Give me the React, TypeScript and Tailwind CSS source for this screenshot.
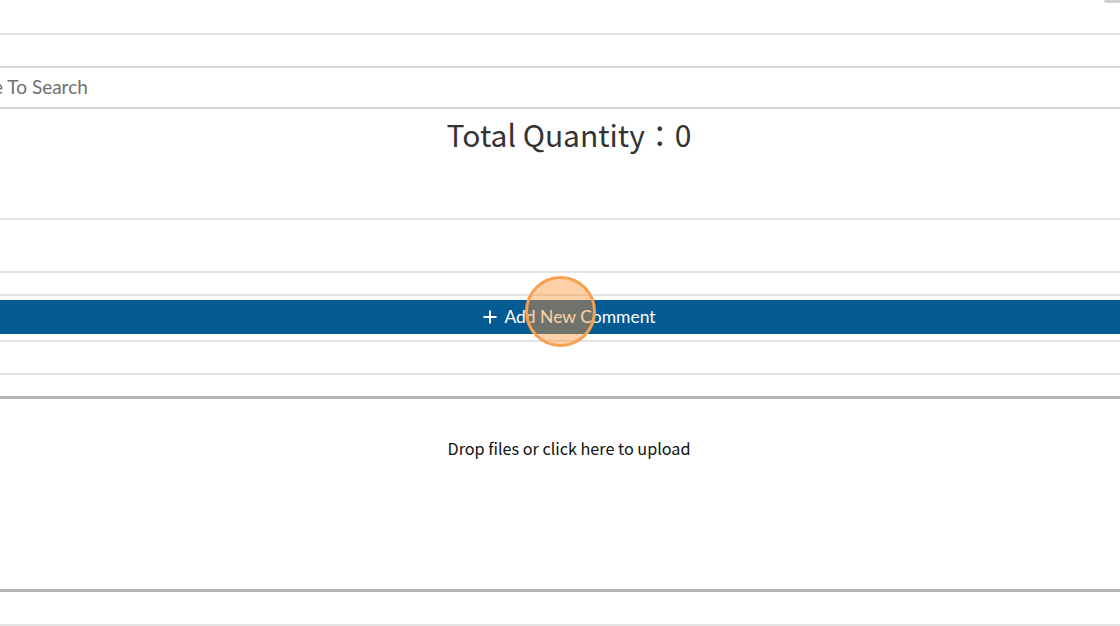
import { Plus } from 'lucide-react';

function Line({ className = 'border-[#e3e3e3]' }: { className?: string }) {
  return <div className={`border-b-2 ${className}`} />;
}

export default function App() {
  return (
    <div className="relative w-[1120px] h-[626px] overflow-hidden bg-white font-['Noto_Sans_CJK_JP','Noto_Sans',sans-serif]">
      <div className="absolute right-0 top-0 w-[16px] h-[3px] rounded-bl-full bg-[#d0d0d0]" />

      <div className="h-[33px]" />
      <Line />
      <div className="h-[31px]" />
      <Line className="border-[#d6d6d6]" />

      {/* search field, scrolled left */}
      <div className="h-[39px] flex items-center overflow-hidden">
        <span className="-ml-[37px] text-[19px] text-[#707070] font-['Lato',sans-serif] whitespace-nowrap">Type To Search</span>
      </div>
      <Line className="border-[#d6d6d6]" />

      <div className="h-[109px] flex justify-center pt-[5px]">
        <div className="text-[30px] leading-[40px] text-[#333] ml-[18px]">Total Quantity：0</div>
      </div>
      <Line />
      <div className="h-[51px]" />
      <Line />
      <div className="h-[21px]" />
      <Line />

      <div className="h-[4px]" />
      <button className="w-full h-[34px] bg-[#045a92] text-white flex items-center justify-center gap-[4px] text-[17.5px] font-['Lato',sans-serif] pl-[16px]">
        <Plus className="w-[20px] h-[20px]" strokeWidth={2.4} />
        <span>Add New Comment</span>
      </button>
      <div className="h-[6px]" />
      <Line />
      <div className="h-[31px]" />
      <Line />
      <div className="h-[21px]" />
      <div className="border-b-[3px] border-[#b3b3b3]" />

      <div className="h-[190px] flex justify-center pt-[37px]">
        <div className="text-[16.2px] text-[#111] ml-[18px]">Drop files or click here to upload</div>
      </div>
      <div className="border-b-[3px] border-[#b3b3b3]" />
      <div className="h-[32px]" />
      <Line />

      {/* click indicator */}
      <div className="absolute left-[525px] top-[276px] w-[71px] h-[71px] rounded-full border-[3px] border-[#f7a04f] bg-[rgba(250,148,57,0.44)]" />
    </div>
  );
}
